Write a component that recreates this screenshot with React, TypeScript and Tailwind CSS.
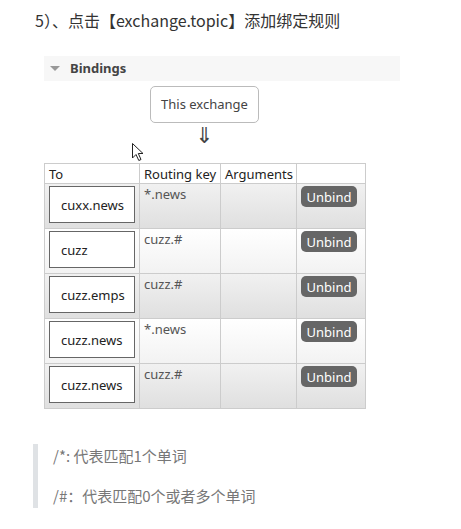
const rows = [
  { to: 'cuxx.news', key: '*.news' },
  { to: 'cuzz', key: 'cuzz.#' },
  { to: 'cuzz.emps', key: 'cuzz.#' },
  { to: 'cuzz.news', key: '*.news' },
  { to: 'cuzz.news', key: 'cuzz.#' },
];

function Cursor() {
  return (
    <svg className="absolute left-[131px] top-[142px]" width="14" height="20" viewBox="0 0 14 20">
      <path
        d="M1.5 1.5 L1.5 16 L5 12.5 L7.8 18.5 L10 17.5 L7.3 11.5 L12 11.5 Z"
        fill="#fff"
        stroke="#222"
        strokeWidth="1"
        strokeLinejoin="round"
      />
    </svg>
  );
}

export default function App() {
  return (
    <div className="relative h-[529px] w-[461px] overflow-hidden bg-white font-['Noto_Sans','Noto_Sans_CJK_SC',sans-serif]">
      <p className="pl-[35px] pt-[9px] text-[16px] leading-[22px] text-[#333] font-['Noto_Sans_CJK_SC','Noto_Sans',sans-serif]">
        5）、点击【exchange.topic】添加绑定规则
      </p>

      <div className="ml-[44px] mt-[25px] flex h-[25px] w-[356px] items-center bg-[#f7f7f7]">
        <div className="ml-[6px] h-0 w-0 border-x-[5px] border-t-[5px] border-x-transparent border-t-[#999]" />
        <span className="ml-[10px] text-[13px] font-bold text-[#444]">Bindings</span>
      </div>

      <div className="ml-[150px] mt-[5px] flex h-[37px] w-[109px] items-center justify-center rounded-[5px] border border-[#bbb] text-[13px] text-[#444]">
        This exchange
      </div>

      <div className="flex h-[40px] w-[409px] justify-center pt-[2px] font-['DejaVu_Sans',sans-serif] text-[22px] leading-[22px] text-[#444]">
        ⇓
      </div>

      <table className="ml-[44px] w-[321px] table-fixed border-collapse text-[13px] leading-[16px]">
        <colgroup>
          <col className="w-[95px]" />
          <col className="w-[81px]" />
          <col className="w-[76px]" />
          <col className="w-[69px]" />
        </colgroup>
        <thead>
          <tr className="h-[20px] bg-white text-left text-[#222]">
            <th className="whitespace-nowrap border border-[#ccc] pl-[4px] font-normal">To</th>
            <th className="whitespace-nowrap border border-[#ccc] pl-[4px] font-normal">Routing key</th>
            <th className="whitespace-nowrap border border-[#ccc] pl-[4px] font-normal">Arguments</th>
            <th className="border border-[#ccc]" />
          </tr>
        </thead>
        <tbody>
          {rows.map((r, i) => (
            <tr
              key={i}
              className={
                i % 2 === 0
                  ? 'h-[45px] bg-linear-to-b from-[#f1f1f1] to-[#dfdfdf]'
                  : 'h-[45px] bg-linear-to-b from-white to-[#f2f2f2]'
              }
            >
              <td className="border border-[#ccc] px-[4px] pt-[2px] pb-[4px] align-top">
                <div className="flex h-[37px] w-[86px] items-center border border-[#666] bg-white pl-[11px] text-[#222]">
                  {r.to}
                </div>
              </td>
              <td className="border border-[#ccc] px-[4px] pt-[2px] align-top text-[#555]">{r.key}</td>
              <td className="border border-[#ccc]" />
              <td className="border border-[#ccc] px-[4px] pt-[2px] align-top">
                <div className="flex h-[21px] w-[56px] items-center justify-center rounded-[5px] bg-[#666] text-white">
                  Unbind
                </div>
              </td>
            </tr>
          ))}
        </tbody>
      </table>

      <blockquote className="ml-[33px] mt-[35px] border-l-[5px] border-[#dfe2e5] pl-[15px] text-[15px] leading-[24px] text-[#777] font-['Noto_Sans_CJK_SC','Noto_Sans',sans-serif]">
        <p>/*: 代表匹配1个单词</p>
        <p className="mt-[16px]">/#：代表匹配0个或者多个单词</p>
      </blockquote>

      <Cursor />
    </div>
  );
}
